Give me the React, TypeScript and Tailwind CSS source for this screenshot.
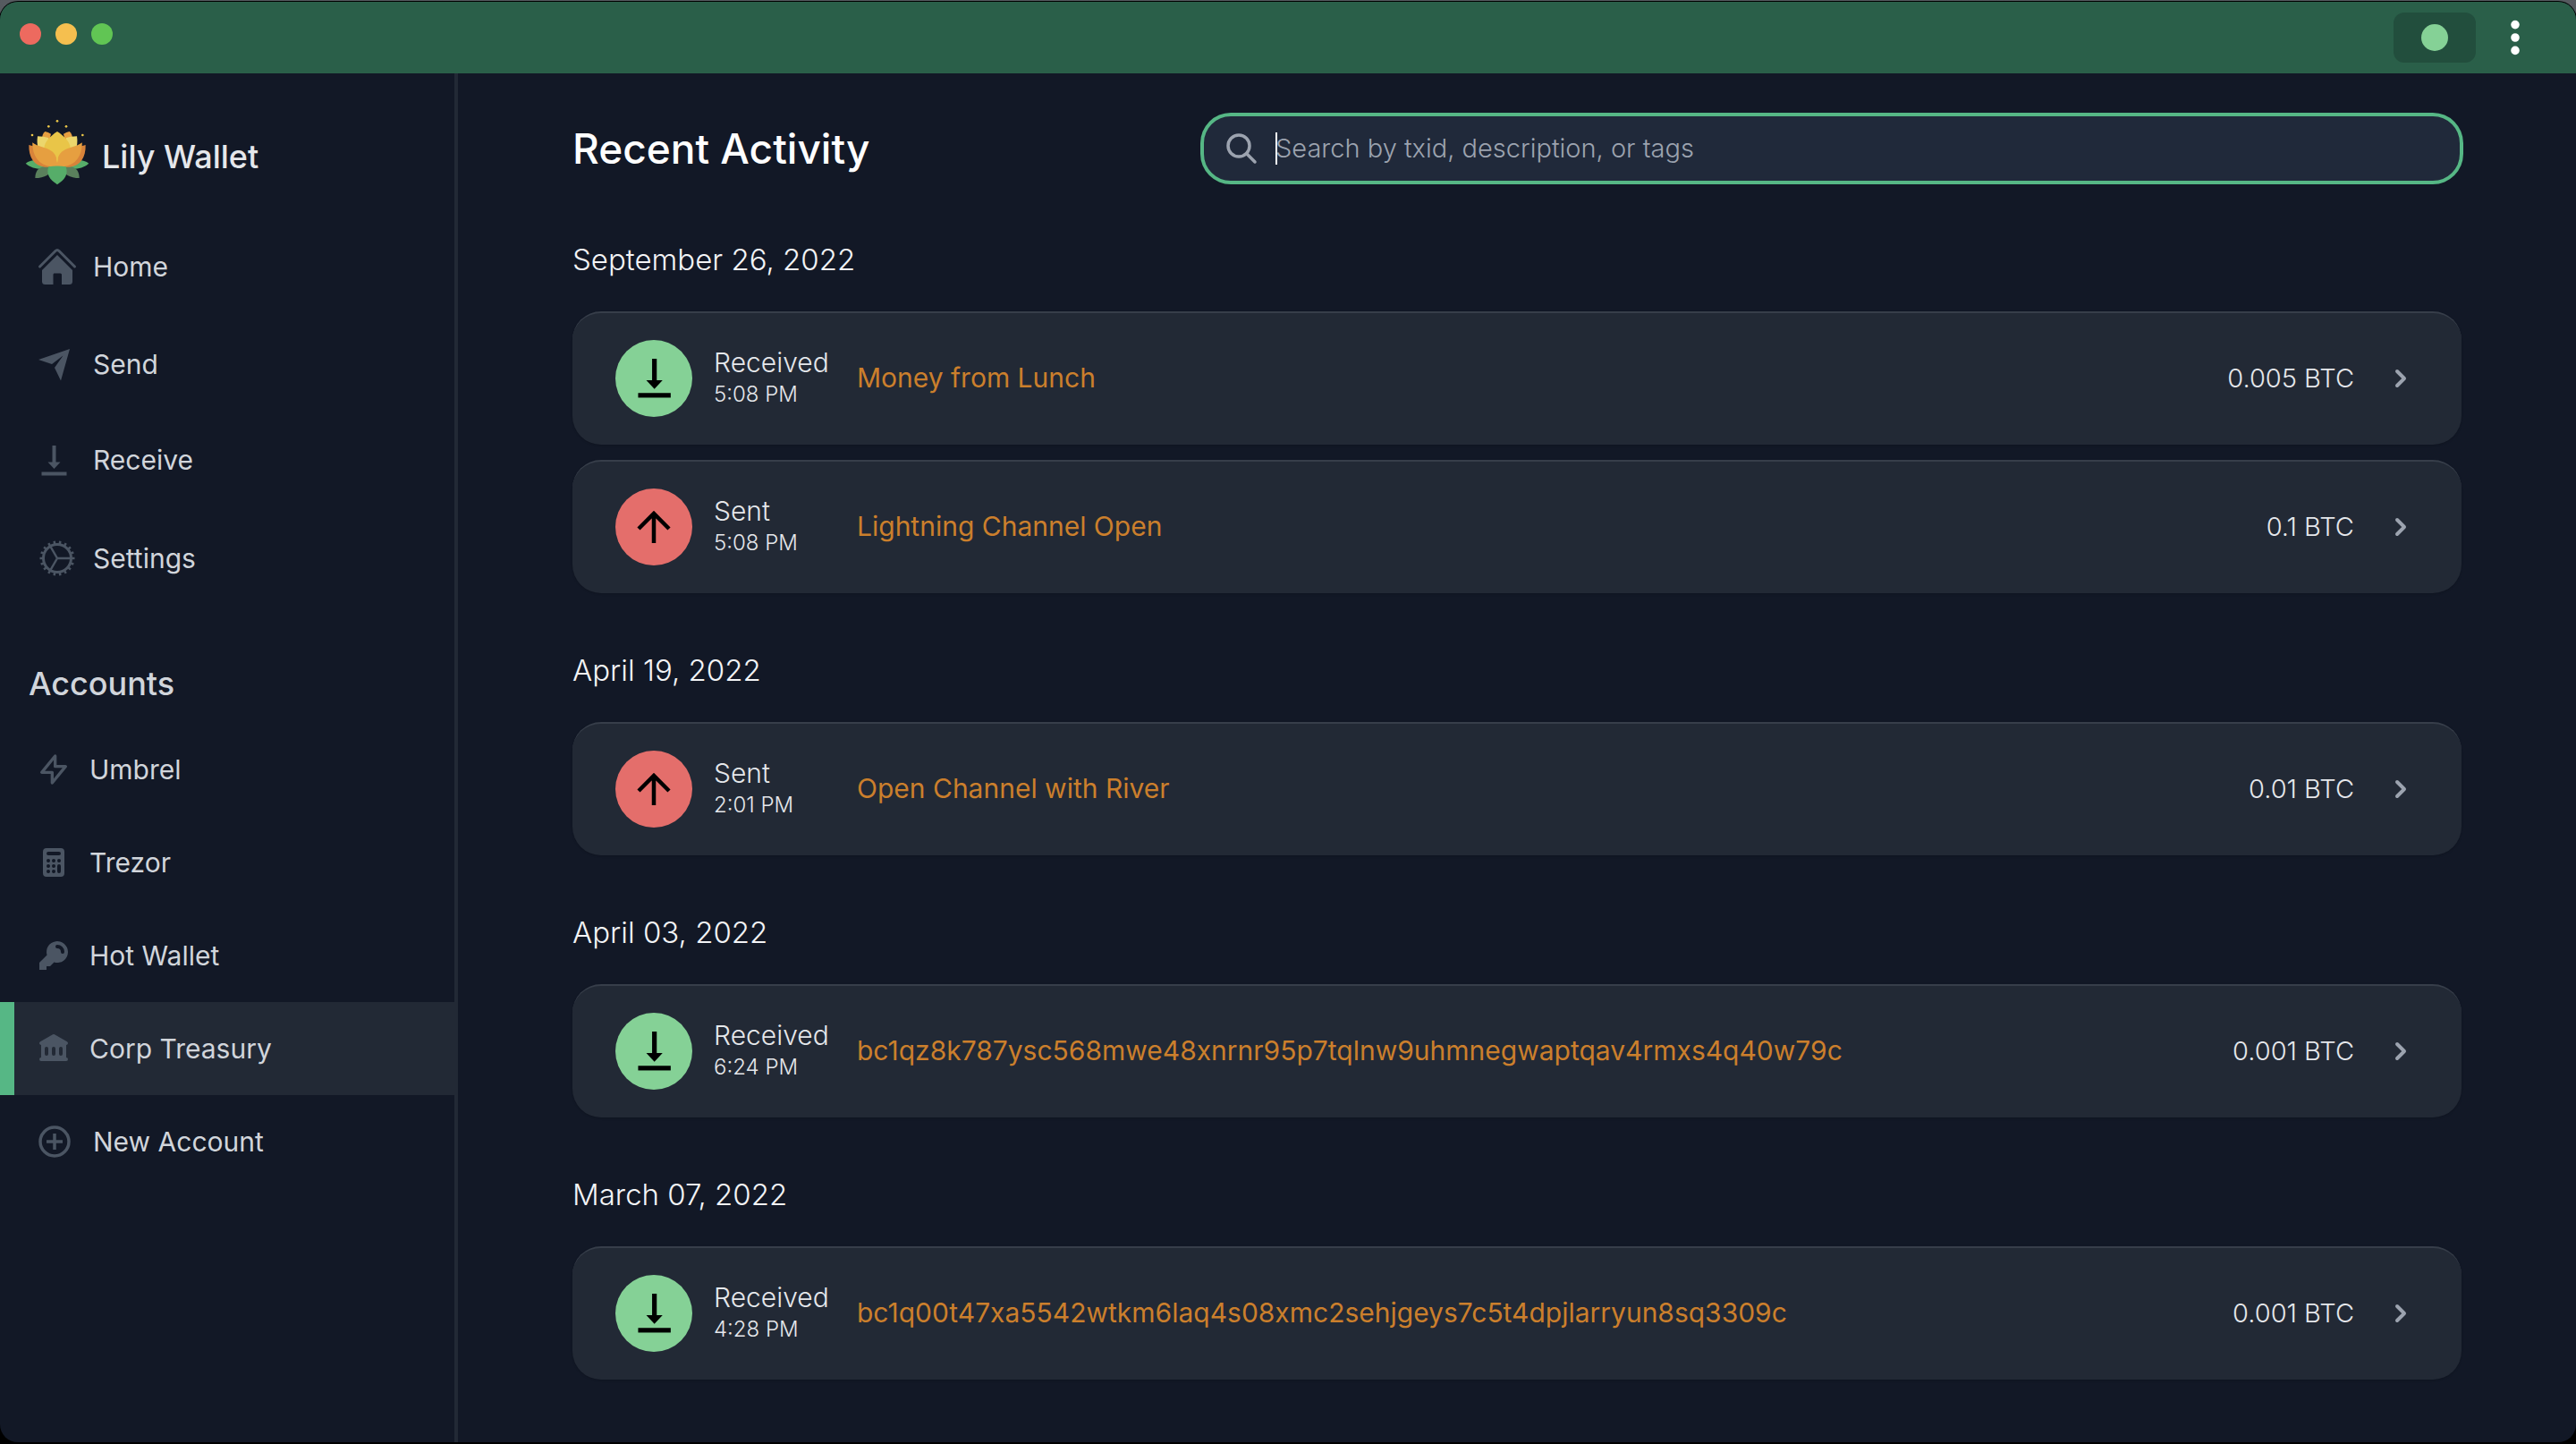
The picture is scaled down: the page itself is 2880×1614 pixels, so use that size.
import React from "react";
import {
  HiCalculator,
  HiChevronRight,
  HiDotsVertical,
  HiKey,
  HiLibrary,
  HiOutlineLightningBolt,
} from "react-icons/hi";

type Kind = "Received" | "Sent";
type Transaction = { kind: Kind; time: string; label: string; amount: string };
type Day = { date: string; transactions: Transaction[] };

const days: Day[] = [
  {
    date: "September 26, 2022",
    transactions: [
      { kind: "Received", time: "5:08 PM", label: "Money from Lunch", amount: "0.005 BTC" },
      { kind: "Sent", time: "5:08 PM", label: "Lightning Channel Open", amount: "0.1 BTC" },
    ],
  },
  {
    date: "April 19, 2022",
    transactions: [{ kind: "Sent", time: "2:01 PM", label: "Open Channel with River", amount: "0.01 BTC" }],
  },
  {
    date: "April 03, 2022",
    transactions: [
      {
        kind: "Received",
        time: "6:24 PM",
        label: "bc1qz8k787ysc568mwe48xnrnr95p7tqlnw9uhmnegwaptqav4rmxs4q40w79c",
        amount: "0.001 BTC",
      },
    ],
  },
  {
    date: "March 07, 2022",
    transactions: [
      {
        kind: "Received",
        time: "4:28 PM",
        label: "bc1q00t47xa5542wtkm6laq4s08xmc2sehjgeys7c5t4dpjlarryun8sq3309c",
        amount: "0.001 BTC",
      },
    ],
  },
];

function LilyLogo() {
  return (
    <svg viewBox="0 0 252 252" className="size-21 shrink-0" aria-hidden="true">
      <g fill="#e9c548">
        <circle cx="120" cy="28" r="4" />
        <circle cx="91" cy="46" r="4" />
        <circle cx="150" cy="46" r="4" />
        <circle cx="36" cy="75" r="4" />
        <circle cx="205" cy="75" r="4" />
      </g>
      {[undefined, "matrix(-1 0 0 1 240 0)"].map((flip, i) => (
        <g key={i} transform={flip}>
          <path d="M14 170C26 161 42 157 58 160L100 182C78 192 38 192 14 170Z" fill="#56ad69" />
          <path d="M46 219C46 200 54 184 76 180L104 182C102 206 76 219 46 219Z" fill="#5a805c" />
          <path d="M79 63Q69 70 69 90L92 100L99 71Q90 65 79 63Z" fill="#e69f40" />
          <path d="M54 79Q50 105 58 125L92 122L90 84Q76 79 54 79Z" fill="#ecd66c" />
          <path d="M25 108C24 150 42 178 78 182H120L60 120L38 101V112L25 108Z" fill="#d8833a" />
        </g>
      ))}
      <path d="M120 63C98 77 76 98 76 120C80 140 104 166 120 170C136 166 160 140 164 120C164 98 142 77 120 63Z" fill="#e9c548" />
      <path d="M37 100C62 122 118 112 120 168V181H100C58 176 36 146 37 100Z" fill="#e69f40" />
      <path d="M203 100C178 122 122 112 120 168V181H140C182 176 204 146 203 100Z" fill="#e69f40" />
      <path d="M120 144Q115 156 120 168Q125 156 120 144Z" fill="#e9c548" />
      <path d="M91 181Q120 176 149 181C158 206 146 224 120 241C94 224 82 206 91 181Z" fill="#56ad69" />
    </svg>
  );
}

function HomeIcon() {
  return (
    <svg viewBox="0 0 48 48" className="size-12" fill="currentColor" aria-hidden="true">
      <path d="M4.500 24L22 6.500Q24 4.500 26 6.500L43.500 24" fill="none" stroke="currentColor" strokeWidth="3" strokeLinecap="round" />
      <path d="M24 11L41 28V40.500Q41 44 37.500 44H29V33Q29 31.500 27.500 31.500H20.500Q19.500 31.500 19.500 33V44H10.500Q7 44 7 40.500V28Z" />
    </svg>
  );
}

function SendIcon() {
  return (
    <svg viewBox="0 0 40 40" className="size-10" fill="currentColor" aria-hidden="true">
      <path d="M3 14L38 2L28 37.500L21 23L30.500 9.500L18 19Z" />
    </svg>
  );
}

function DownloadIcon({ className }: { className: string }) {
  return (
    <svg viewBox="0 0 40 40" className={className} fill="currentColor" aria-hidden="true">
      <path d="M18.500 3H22.500V21.500H27.500L20.500 29L13.500 21.500H18.500Z" />
      <rect x="6.500" y="32.500" width="28" height="4" />
    </svg>
  );
}

function ArrowUpIcon() {
  return (
    <svg viewBox="0 0 44 44" className="size-11" fill="none" stroke="currentColor" strokeWidth="4.500" aria-hidden="true">
      <path d="M22 40V6M5 24L22 7L39 24" />
    </svg>
  );
}

function GearIcon() {
  const teeth = Array.from({ length: 18 }, (_, i) => i * 20);
  return (
    <svg viewBox="0 0 48 48" className="size-12" fill="none" stroke="currentColor" aria-hidden="true">
      <circle cx="24" cy="24" r="15.500" strokeWidth="3" />
      {teeth.map((angle) => (
        <path key={angle} d="M40 24H43.500" strokeWidth="2.500" transform={`rotate(${angle} 24 24)`} />
      ))}
      <path d="M24 24H39M24 24L16.500 11M24 24L16.500 37" strokeWidth="2.500" />
    </svg>
  );
}

function PlusCircleIcon() {
  return (
    <svg viewBox="0 0 40 40" className="size-10" fill="none" stroke="currentColor" strokeWidth="3.500" aria-hidden="true">
      <circle cx="21" cy="20" r="16" />
      <path d="M21 11V29M12 20H30" />
    </svg>
  );
}

function SearchIcon() {
  return (
    <svg viewBox="0 0 36 36" className="size-9 shrink-0 text-[#9ca3af]" fill="none" stroke="currentColor" strokeWidth="3.500" aria-hidden="true">
      <circle cx="15" cy="15" r="12" />
      <path d="M23.500 23.500L33 33" strokeLinecap="round" />
    </svg>
  );
}

const primaryLinks = [
  { name: "Home", icon: <HomeIcon />, row: "h-28 gap-4" },
  { name: "Send", icon: <SendIcon />, row: "h-[107px] gap-6" },
  { name: "Receive", icon: <DownloadIcon className="size-10" />, row: "h-[107px] gap-6" },
  { name: "Settings", icon: <GearIcon />, row: "h-28 gap-4" },
];

const accountLinks = [
  { name: "Umbrel", icon: <HiOutlineLightningBolt className="size-10" />, row: "gap-5" },
  { name: "Trezor", icon: <HiCalculator className="size-10" />, row: "gap-5" },
  { name: "Hot Wallet", icon: <HiKey className="size-10" />, row: "gap-5" },
  { name: "Corp Treasury", icon: <HiLibrary className="size-10" />, row: "gap-5", active: true },
  { name: "New Account", icon: <PlusCircleIcon />, row: "gap-6" },
];

function TitleBar() {
  return (
    <header className="flex h-20 shrink-0 items-center bg-[#2a5f49] pl-[22px] pr-11">
      <div className="mb-2 flex gap-4">
        <button aria-label="Close" className="size-6 rounded-full bg-[#ed6a5f]" />
        <button aria-label="Minimize" className="size-6 rounded-full bg-[#f5bf4f]" />
        <button aria-label="Zoom" className="size-6 rounded-full bg-[#61c554]" />
      </div>
      <button aria-label="Connection status" className="ml-auto flex h-14 w-23 items-center justify-center rounded-xl bg-[#224e3d]">
        <span className="size-[30px] rounded-full bg-[#85d196]" />
      </button>
      <button aria-label="Menu" className="ml-5 text-white">
        <HiDotsVertical className="size-12" />
      </button>
    </header>
  );
}

function Sidebar() {
  return (
    <aside className="w-lg shrink-0 border-r-4 border-[#222935] pt-11 text-[#d1d5db]">
      <div className="flex items-end gap-1.5 pl-6">
        <LilyLogo />
        <span className="mb-[11px] text-[36px] leading-[48px] font-medium text-[#e5e7eb]">Lily Wallet</span>
      </div>
      <nav className="mt-8 text-[30px]">
        {primaryLinks.map((link) => (
          <a key={link.name} href="#" className={`flex items-center pl-10 ${link.row}`}>
            <span className="text-[#4b5563]">{link.icon}</span>
            {link.name}
          </a>
        ))}
      </nav>
      <h2 className="mt-[60px] mb-5 pl-8 text-[36px] leading-[48px] font-medium">Accounts</h2>
      <nav className="text-[30px]">
        {accountLinks.map((link) => (
          <a
            key={link.name}
            href="#"
            aria-current={link.active ? "page" : undefined}
            className={`flex h-26 items-center border-l-16 pl-6 ${link.row} ${
              link.active ? "border-[#56b785] bg-[#222935]" : "border-transparent"
            }`}
          >
            <span className="text-[#4b5563]">{link.icon}</span>
            {link.name}
          </a>
        ))}
      </nav>
    </aside>
  );
}

function TransactionCard({ kind, time, label, amount }: Transaction) {
  return (
    <button className="flex h-[149px] w-full items-center rounded-4xl border-t-2 border-[#373e4a] bg-[#222935] px-12 pb-0.5 text-left shadow-sm">
      <span
        className={`flex size-[86px] shrink-0 items-center justify-center rounded-full text-black ${
          kind === "Received" ? "bg-[#85d196]" : "bg-[#e46e6b]"
        }`}
      >
        {kind === "Received" ? <DownloadIcon className="size-13" /> : <ArrowUpIcon />}
      </span>
      <span className="ml-6 flex w-40 shrink-0 flex-col leading-9 font-light text-[#e5e7eb]">
        <span className="text-[30px]">{kind}</span>
        <span className="text-[24px]">{time}</span>
      </span>
      <span className="min-w-0 flex-1 truncate text-[30px] text-[#cb7f2c]">{label}</span>
      <span className="text-[29px] font-light text-[#e5e7eb]">{amount}</span>
      <HiChevronRight className="ml-8 size-10 shrink-0 text-[#9ca3af]" />
    </button>
  );
}

export default function App() {
  return (
    <div className="flex min-h-screen flex-col bg-linear-to-b from-[#565b60] to-black py-[2px] font-['Inter',sans-serif]">
      <div className="flex flex-1 flex-col overflow-hidden rounded-[20px] bg-[#121826] ring-1 ring-black">
        <TitleBar />
        <div className="flex flex-1">
          <Sidebar />
          <main className="min-w-0 flex-1 px-32 pt-[46px]">
            <div className="flex items-center">
              <h1 className="w-1/3 text-[46px] leading-[60px] font-medium text-white">Recent Activity</h1>
              <label className="flex h-19 flex-1 items-center gap-5 rounded-4xl border-2 border-[#56b785] bg-[#20293a] px-6 ring-2 ring-[#56b785]">
                <SearchIcon />
                <span className="relative flex flex-1">
                  <input
                    type="text"
                    aria-label="Search transactions"
                    placeholder="Search by txid, description, or tags"
                    className="w-full bg-transparent text-[29px] leading-10 font-light text-white outline-none placeholder:text-[#9ca3af]"
                  />
                  <span className="absolute inset-y-0.5 left-0 w-0.5 bg-white" />
                </span>
              </label>
            </div>
            <div className="mt-16 flex flex-col gap-16">
              {days.map((day) => (
                <section key={day.date}>
                  <h2 className="mb-9 text-[33px] leading-11 font-light text-[#f3f4f6]">{day.date}</h2>
                  <ul className="flex flex-col gap-[17px]">
                    {day.transactions.map((tx) => (
                      <li key={tx.label}>
                        <TransactionCard {...tx} />
                      </li>
                    ))}
                  </ul>
                </section>
              ))}
            </div>
          </main>
        </div>
      </div>
    </div>
  );
}
